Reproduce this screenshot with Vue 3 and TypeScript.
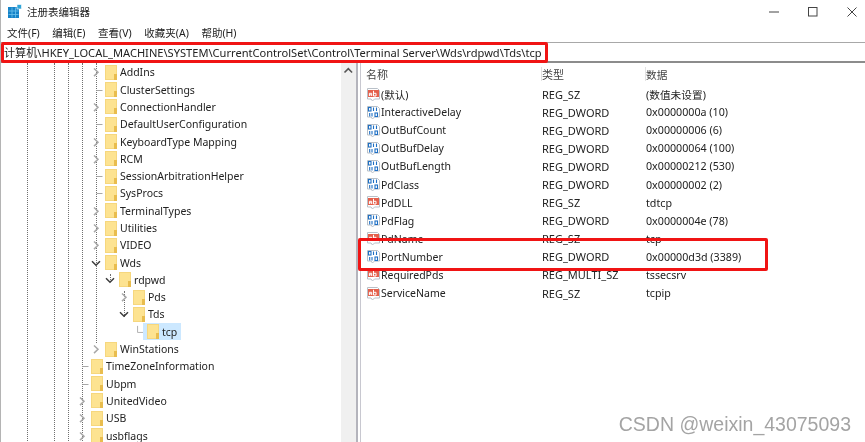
<script setup lang="ts">
type Toggle = 'closed' | 'open' | 'leaf' | 'corner'
interface TreeNode { name: string; depth: number; toggle: Toggle; selected?: boolean }
interface ValueRow { name: string; kind: 'sz' | 'bin'; type: string; data: string }

const menus = ['文件(F)', '编辑(E)', '查看(V)', '收藏夹(A)', '帮助(H)']
const address = '计算机\\HKEY_LOCAL_MACHINE\\SYSTEM\\CurrentControlSet\\Control\\Terminal Server\\Wds\\rdpwd\\Tds\\tcp'

const nodes: TreeNode[] = [
  { name: 'AddIns', depth: 1, toggle: 'closed' },
  { name: 'ClusterSettings', depth: 1, toggle: 'leaf' },
  { name: 'ConnectionHandler', depth: 1, toggle: 'closed' },
  { name: 'DefaultUserConfiguration', depth: 1, toggle: 'leaf' },
  { name: 'KeyboardType Mapping', depth: 1, toggle: 'closed' },
  { name: 'RCM', depth: 1, toggle: 'closed' },
  { name: 'SessionArbitrationHelper', depth: 1, toggle: 'leaf' },
  { name: 'SysProcs', depth: 1, toggle: 'leaf' },
  { name: 'TerminalTypes', depth: 1, toggle: 'closed' },
  { name: 'Utilities', depth: 1, toggle: 'closed' },
  { name: 'VIDEO', depth: 1, toggle: 'closed' },
  { name: 'Wds', depth: 1, toggle: 'open' },
  { name: 'rdpwd', depth: 2, toggle: 'open' },
  { name: 'Pds', depth: 3, toggle: 'closed' },
  { name: 'Tds', depth: 3, toggle: 'open' },
  { name: 'tcp', depth: 4, toggle: 'corner', selected: true },
  { name: 'WinStations', depth: 1, toggle: 'closed' },
  { name: 'TimeZoneInformation', depth: 0, toggle: 'leaf' },
  { name: 'Ubpm', depth: 0, toggle: 'leaf' },
  { name: 'UnitedVideo', depth: 0, toggle: 'closed' },
  { name: 'USB', depth: 0, toggle: 'closed' },
  { name: 'usbflags', depth: 0, toggle: 'closed' },
]

const guides = [
  { x: 26, top: 0, height: 380 },
  { x: 53, top: 0, height: 380 },
  { x: 67, top: 0, height: 380 },
  { x: 81, top: 0, height: 380 },
  { x: 95, top: 0, height: 280 },
  { x: 109, top: 211, height: 6 },
  { x: 123, top: 228, height: 26 },
]

const rows: ValueRow[] = [
  { name: '(默认)', kind: 'sz', type: 'REG_SZ', data: '(数值未设置)' },
  { name: 'InteractiveDelay', kind: 'bin', type: 'REG_DWORD', data: '0x0000000a (10)' },
  { name: 'OutBufCount', kind: 'bin', type: 'REG_DWORD', data: '0x00000006 (6)' },
  { name: 'OutBufDelay', kind: 'bin', type: 'REG_DWORD', data: '0x00000064 (100)' },
  { name: 'OutBufLength', kind: 'bin', type: 'REG_DWORD', data: '0x00000212 (530)' },
  { name: 'PdClass', kind: 'bin', type: 'REG_DWORD', data: '0x00000002 (2)' },
  { name: 'PdDLL', kind: 'sz', type: 'REG_SZ', data: 'tdtcp' },
  { name: 'PdFlag', kind: 'bin', type: 'REG_DWORD', data: '0x0000004e (78)' },
  { name: 'PdName', kind: 'sz', type: 'REG_SZ', data: 'tcp' },
  { name: 'PortNumber', kind: 'bin', type: 'REG_DWORD', data: '0x00000d3d (3389)' },
  { name: 'RequiredPds', kind: 'sz', type: 'REG_MULTI_SZ', data: 'tssecsrv' },
  { name: 'ServiceName', kind: 'sz', type: 'REG_SZ', data: 'tcpip' },
]
</script>

<template>
  <div class="window">
    <header class="titlebar">
      <svg class="app-icon" width="14" height="14" viewBox="0 0 14 14">
        <rect x="0" y="3" width="11" height="11" fill="#1683c8" />
        <path d="M0.500 7h10M0.500 10.500h10M4 3.500v10M7.500 3.500v10" stroke="#6cc3ee" stroke-width="0.8" />
        <rect x="9" y="0.500" width="4.500" height="4.500" fill="#2fa4d8" stroke="#fff" stroke-width="0.6" />
      </svg>
      <span class="title">注册表编辑器</span>
      <div class="controls">
        <svg width="10" height="10" viewBox="0 0 10 10"><path d="M0 5h10" stroke="#444" stroke-width="1" /></svg>
        <svg width="10" height="10" viewBox="0 0 10 10"><rect x="0.5" y="0.5" width="8.5" height="8.5" fill="none" stroke="#444" /></svg>
        <svg width="10" height="10" viewBox="0 0 10 10"><path d="M0.5 0.5l9 9M9.5 0.5l-9 9" stroke="#444" stroke-width="1" /></svg>
      </div>
    </header>
    <nav class="menubar">
      <span v-for="m in menus" :key="m">{{ m }}</span>
    </nav>
    <div class="address"><span>{{ address }}</span></div>
    <main class="body">
      <section class="tree">
        <i
          v-for="g in guides"
          :key="g.x"
          class="guide"
          :style="{ left: g.x + 'px', top: g.top + 'px', height: g.height + 'px' }"
        ></i>
        <div
          v-for="n in nodes"
          :key="n.name"
          class="node"
          :style="{ paddingLeft: 74 + n.depth * 14 + 'px' }"
        >
          <span class="toggle">
            <svg v-if="n.toggle === 'closed'" width="14" height="14" viewBox="0 0 14 14">
              <path d="M5 3.5l4 3.8-4 3.8" fill="none" stroke="#a8a8a8" stroke-width="1.5" />
            </svg>
            <svg v-else-if="n.toggle === 'open'" width="14" height="14" viewBox="0 0 14 14">
              <path d="M3 5.2l4 4 4-4" fill="none" stroke="#3c3c3c" stroke-width="1.5" />
            </svg>
            <svg v-else-if="n.toggle === 'leaf'" width="14" height="14" viewBox="0 0 14 14">
              <path d="M7.5 7.5h6" stroke="#a8a8a8" stroke-width="1" />
            </svg>
            <svg v-else width="16" height="14" viewBox="0 0 16 14">
              <path d="M7.5 0v7.5h7" fill="none" stroke="#a8a8a8" stroke-width="1" />
            </svg>
          </span>
          <span class="node-label" :class="{ selected: n.selected }">
            <svg class="folder" width="12" height="15" viewBox="0 0 12 15">
              <rect x="0.5" y="0.5" width="11" height="14" fill="#fde391" stroke="#f6d77e" />
              <rect x="9" y="9" width="3" height="6" fill="#e9bd4e" />
            </svg>
            <span>{{ n.name }}</span>
          </span>
        </div>
      </section>
      <aside class="vscroll">
        <svg width="15" height="16" viewBox="0 0 15 16">
          <path d="M3.5 9.5l3.8-3.8 3.8 3.8" fill="none" stroke="#555" stroke-width="1.6" />
        </svg>
      </aside>
      <div class="splitter"></div>
      <section class="list">
        <div class="row head">
          <span class="c-name">名称</span>
          <span class="c-type">类型</span>
          <span class="c-data">数据</span>
        </div>
        <div v-for="r in rows" :key="r.name" class="row">
          <span class="c-name">
            <svg class="vicon" width="15" height="15" viewBox="0 0 15 15">
              <path d="M1.5 1.5h10l2 2v8.5h-5l-2 2-1.5-2h-3.500z" fill="#fff" stroke="#b9c0c8" stroke-width="1" />
              <template v-if="r.kind === 'sz'">
                <rect x="2" y="3" width="11" height="7" fill="#e4604c" />
                <path d="M3.400 9V6.300h2.300V9M3.400 7.800h2.300M7.500 3.800V9h2.500V6.300H7.500" fill="none" stroke="#fff" stroke-width="1" />
              </template>
              <template v-else>
                <g fill="none" stroke="#1f6fc4" stroke-width="1.100">
                  <rect x="2.500" y="2.500" width="2.500" height="3.500" />
                  <path d="M7.500 2.500V6M10.500 2.500V6" />
                  <path d="M3.700 8V11.500M6 8v3.500" />
                  <rect x="9" y="8" width="2.500" height="3.500" />
                </g>
              </template>
            </svg>
            <span class="name-text">{{ r.name }}</span>
          </span>
          <span class="c-type">{{ r.type }}</span>
          <span class="c-data">{{ r.data }}</span>
        </div>
      </section>
    </main>
    <div class="mark mark-address"></div>
    <div class="mark mark-port"></div>
    <div class="watermark">CSDN @weixin_43075093</div>
  </div>
</template>

<style scoped>
.window {
  position: relative;
  width: 865px;
  height: 442px;
  overflow: hidden;
  display: flex;
  flex-direction: column;
  box-sizing: border-box;
  border-left: 1px solid #b4b4b4;
  background: #fff;
  color: #222;
  font-family: "Noto Sans", "Noto Sans CJK SC", sans-serif;
  font-size: 11px;
  filter: blur(0.35px);
}
.titlebar {
  height: 23px;
  flex: none;
  display: flex;
  align-items: center;
  padding-left: 7px;
}
.app-icon { margin-right: 4px; margin-top: -1px; }
.title { font-size: 10.5px; margin-left: 1px; }
.controls {
  margin-left: auto;
  display: flex;
  gap: 29px;
  padding-right: 8px;
}
.menubar {
  height: 19px;
  flex: none;
  display: flex;
  gap: 12.600px;
  align-items: center;
  padding-left: 6px;
  font-size: 10.5px;
  border-bottom: 1px solid #a8a8a8;
}
.address {
  height: 18px;
  flex: none;
  display: flex;
  align-items: center;
  padding-left: 3px;
  border-bottom: 2px solid #8c8c8c;
  white-space: nowrap;
  font-size: 11.100px;
}
.body {
  flex: 1;
  min-height: 0;
  display: flex;
}
.tree {
  position: relative;
  width: 340px;
  flex: none;
  overflow: hidden;
  padding-top: 0.700px;
  font-size: 10.500px;
}
.guide {
  position: absolute;
  width: 0;
  border-left: 1px dotted #707070;
}
.node {
  position: relative;
  height: 17.300px;
  display: flex;
  align-items: center;
  white-space: nowrap;
}
.toggle {
  width: 14px;
  margin-right: 2px;
  flex: none;
  display: flex;
  align-items: center;
}
.node-label {
  display: flex;
  align-items: center;
  height: 17.300px;
  padding: 0 4px;
  margin-left: -4px;
}
.node-label.selected { background: #cce8ff; }
.folder { margin-right: 3px; flex: none; }
.vscroll {
  width: 15px;
  flex: none;
  background: #f0f0f0;
}
.vscroll svg { display: block; }
.splitter {
  width: 2px;
  flex: none;
  margin-right: 2px;
  background: #b4b4bc;
}
.list {
  flex: 1;
  min-width: 0;
  border-left: 1px solid #c8c8d0;
}
.row {
  height: 18.100px;
  display: grid;
  grid-template-columns: 176px 104px 1fr;
  align-items: center;
  padding-left: 5px;
  white-space: nowrap;
}
.row.head {
  height: 22px;
  color: #444;
}
.row.head .c-type, .row.head .c-data {
  height: 22px;
  display: flex;
  align-items: center;
  box-shadow: -5px 0 0 -4px #e2e2e2;
}
.c-name {
  display: flex;
  align-items: center;
}
.name-text { font-size: 10.500px; }
.c-data { font-size: 10.700px; }
.vicon { flex: none; }
.mark {
  position: absolute;
  border: 3px solid #f01414;
  border-radius: 2px;
  box-sizing: border-box;
  pointer-events: none;
}
.mark-address { left: 0; top: 42px; width: 547px; height: 21px; }
.mark-port { left: 357px; top: 238px; width: 410px; height: 33px; }
.watermark {
  position: absolute;
  right: 14px;
  bottom: 6px;
  font-family: "Liberation Sans", sans-serif;
  font-size: 19.500px;
  color: #a4a4a4;
  white-space: nowrap;
}
</style>
